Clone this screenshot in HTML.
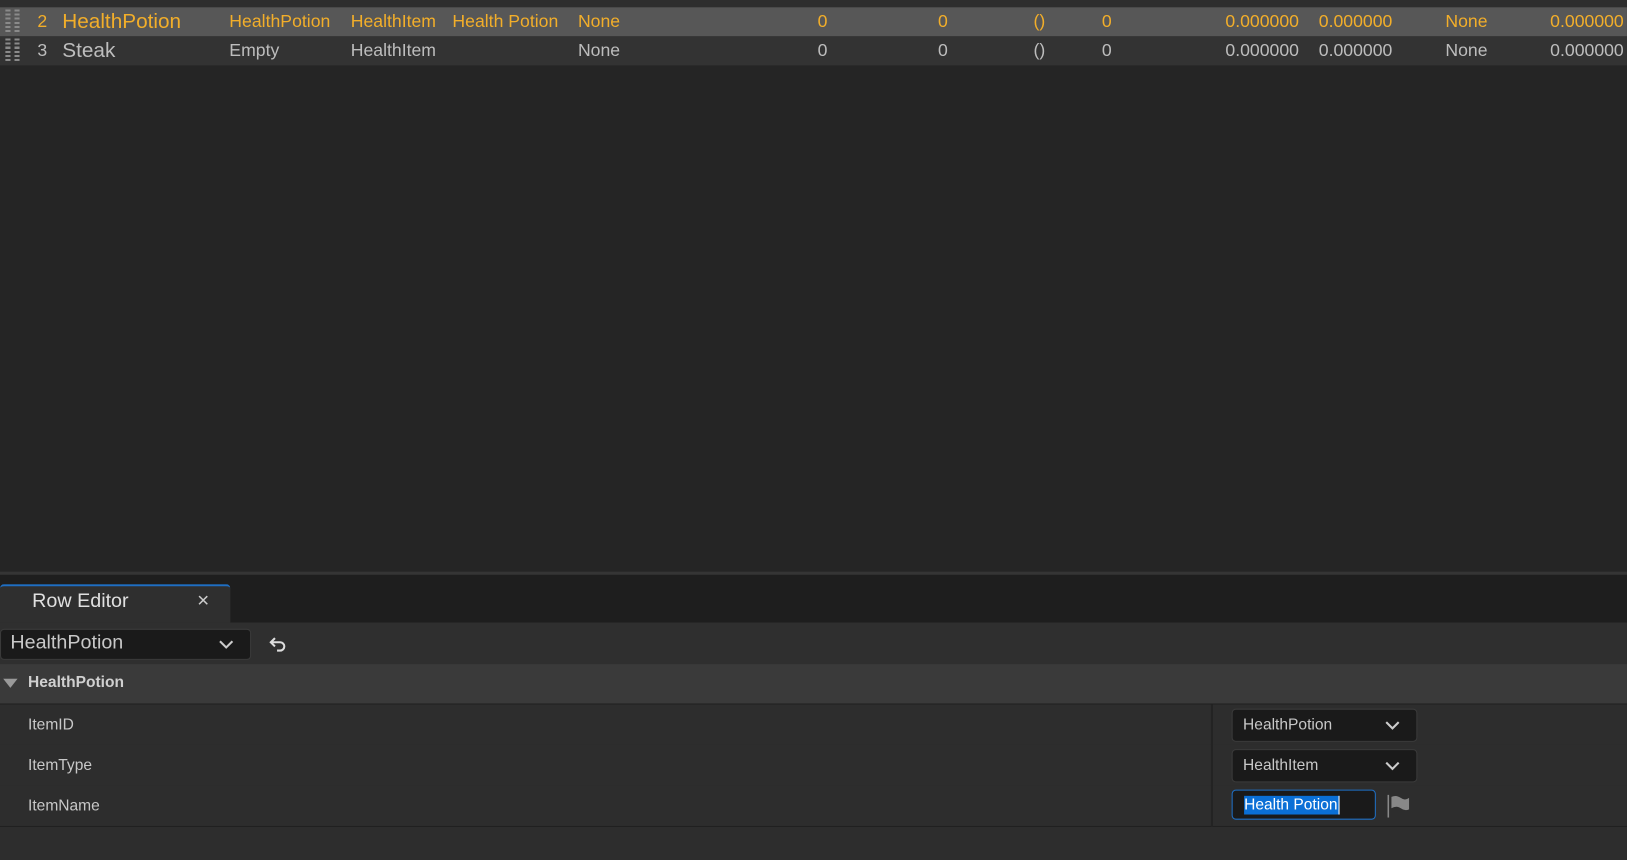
<!DOCTYPE html><html><head><style>
body{margin:0;width:1627px;height:829px;background:#252525;font-family:"Liberation Sans",sans-serif;overflow:hidden;position:relative}
#w{position:absolute;left:0;top:0;width:1568px;height:800px;transform:scale(1.0376);transform-origin:0 0}
#w div,#w span{position:absolute;white-space:nowrap}
.r{height:28px;left:0;width:1568px;font-size:17px;line-height:28px}
.o{color:#f2ae2a}.g{color:#bdbdbd}
.grip{left:5px;top:2px;width:14px;height:24px;background:repeating-linear-gradient(#8a8a8a 0 2px,transparent 2px 4px);-webkit-mask:linear-gradient(90deg,#000 0 5px,transparent 5px 9px,#000 9px 14px)}
.p{height:39px;left:0;width:1568px;background:#2d2d2d;border-bottom:1px solid #202020;font-size:15px;color:#c8c8c8;line-height:39px}
.cb{left:1187px;width:177px;height:30px;top:4px;background:#1a1a1a;border:1px solid #3a3a3a;border-radius:4px;line-height:30px;font-size:15px;color:#c8c8c8}
</style></head><body><div id="w">
<div class="r" style="top:0;height:7px;background:#2e2e2e"></div>
<div class="r o" style="top:7px;background:#575757"><div class="grip"></div>
<span style="left:36px">2</span><span style="left:60px;font-size:20px">HealthPotion</span><span style="left:221px">HealthPotion</span><span style="left:338px">HealthItem</span><span style="left:436px">Health Potion</span><span style="left:557px">None</span><span style="left:788px">0</span><span style="left:904px">0</span><span style="left:996px">()</span><span style="left:1062px">0</span><span style="left:1181px">0.000000</span><span style="left:1271px">0.000000</span><span style="left:1393px">None</span><span style="left:1494px">0.000000</span></div>
<div class="r g" style="top:35px;background:#333"><div class="grip"></div>
<span style="left:36px">3</span><span style="left:60px;font-size:20px">Steak</span><span style="left:221px">Empty</span><span style="left:338px">HealthItem</span><span style="left:557px">None</span><span style="left:788px">0</span><span style="left:904px">0</span><span style="left:996px">()</span><span style="left:1062px">0</span><span style="left:1181px">0.000000</span><span style="left:1271px">0.000000</span><span style="left:1393px">None</span><span style="left:1494px">0.000000</span></div>
<div style="top:551px;left:0;width:1568px;height:3px;background:#353535"></div>
<div style="top:554px;left:0;width:1568px;height:46px;background:#1e1e1e"></div>
<div style="top:563px;left:0;width:222px;height:37px;background:#2f2f2f;border-top:2px solid #1f6fc4;border-radius:4px 4px 0 0;box-sizing:border-box"><span style="left:31px;top:4px;font-size:19px;color:#e0e0e0">Row Editor</span><span style="left:190px;top:3px;font-size:20px;color:#ccc">×</span></div>
<div style="top:600px;left:0;width:1568px;height:40px;background:#2f2f2f"></div>
<div style="top:606px;left:0;width:242px;height:30px;background:#1a1a1a;border:1px solid #3a3a3a;border-radius:4px;box-sizing:border-box"><span style="left:9px;top:2px;font-size:19px;color:#c8c8c8">HealthPotion</span><svg style="position:absolute;left:210px;top:10px" width="14" height="9"><path d="M1 1l6 6 6-6" stroke="#ccc" stroke-width="2" fill="none"/></svg></div>
<svg style="position:absolute;left:259px;top:613px" width="18" height="16"><path d="M6 2L2 6l4 4M2 6h9a4 4 0 010 8H8" stroke="#ddd" stroke-width="2" fill="none"/></svg>
<div style="top:640px;left:0;width:1568px;height:38px;background:#3a3a3a;border-bottom:1px solid #202020"><svg style="position:absolute;left:3px;top:14px" width="14" height="10"><path d="M0 0h14L7 9z" fill="#999"/></svg><span style="left:27px;top:9px;font-size:15px;font-weight:bold;color:#d0d0d0">HealthPotion</span></div>
<div class="p" style="top:679px"><span style="left:27px">ItemID</span><div class="cb"><span style="left:10px">HealthPotion</span><svg style="position:absolute;left:147px;top:11px" width="14" height="9"><path d="M1 1l6 6 6-6" stroke="#ccc" stroke-width="2" fill="none"/></svg></div></div>
<div class="p" style="top:718px"><span style="left:27px">ItemType</span><div class="cb"><span style="left:10px">HealthItem</span><svg style="position:absolute;left:147px;top:11px" width="14" height="9"><path d="M1 1l6 6 6-6" stroke="#ccc" stroke-width="2" fill="none"/></svg></div></div>
<div class="p" style="top:757px"><span style="left:27px">ItemName</span><div style="left:1187px;top:4px;width:137px;height:27px;background:#1a1a1a;border:1px solid #1f6fc4;border-radius:4px"><span style="left:11px;top:5px;height:18px;line-height:18px;background:#0a6fd6;color:#fff;font-size:15px;padding-right:1px;border-right:1px solid #fff">Health Potion</span></div><svg style="position:absolute;left:1337px;top:9px" width="22" height="22"><path d="M1 0v22" stroke="#888" stroke-width="1.5"/><path d="M4 2q5-2 9 1t8 0v11q-4 2-8-1t-9 0z" fill="#888"/></svg></div>
<div style="top:679px;left:1167px;width:2px;height:130px;background:#232323"></div>
<div style="top:797px;left:0;width:1568px;height:32px;background:#2d2d2d"></div>
</div></body></html>
